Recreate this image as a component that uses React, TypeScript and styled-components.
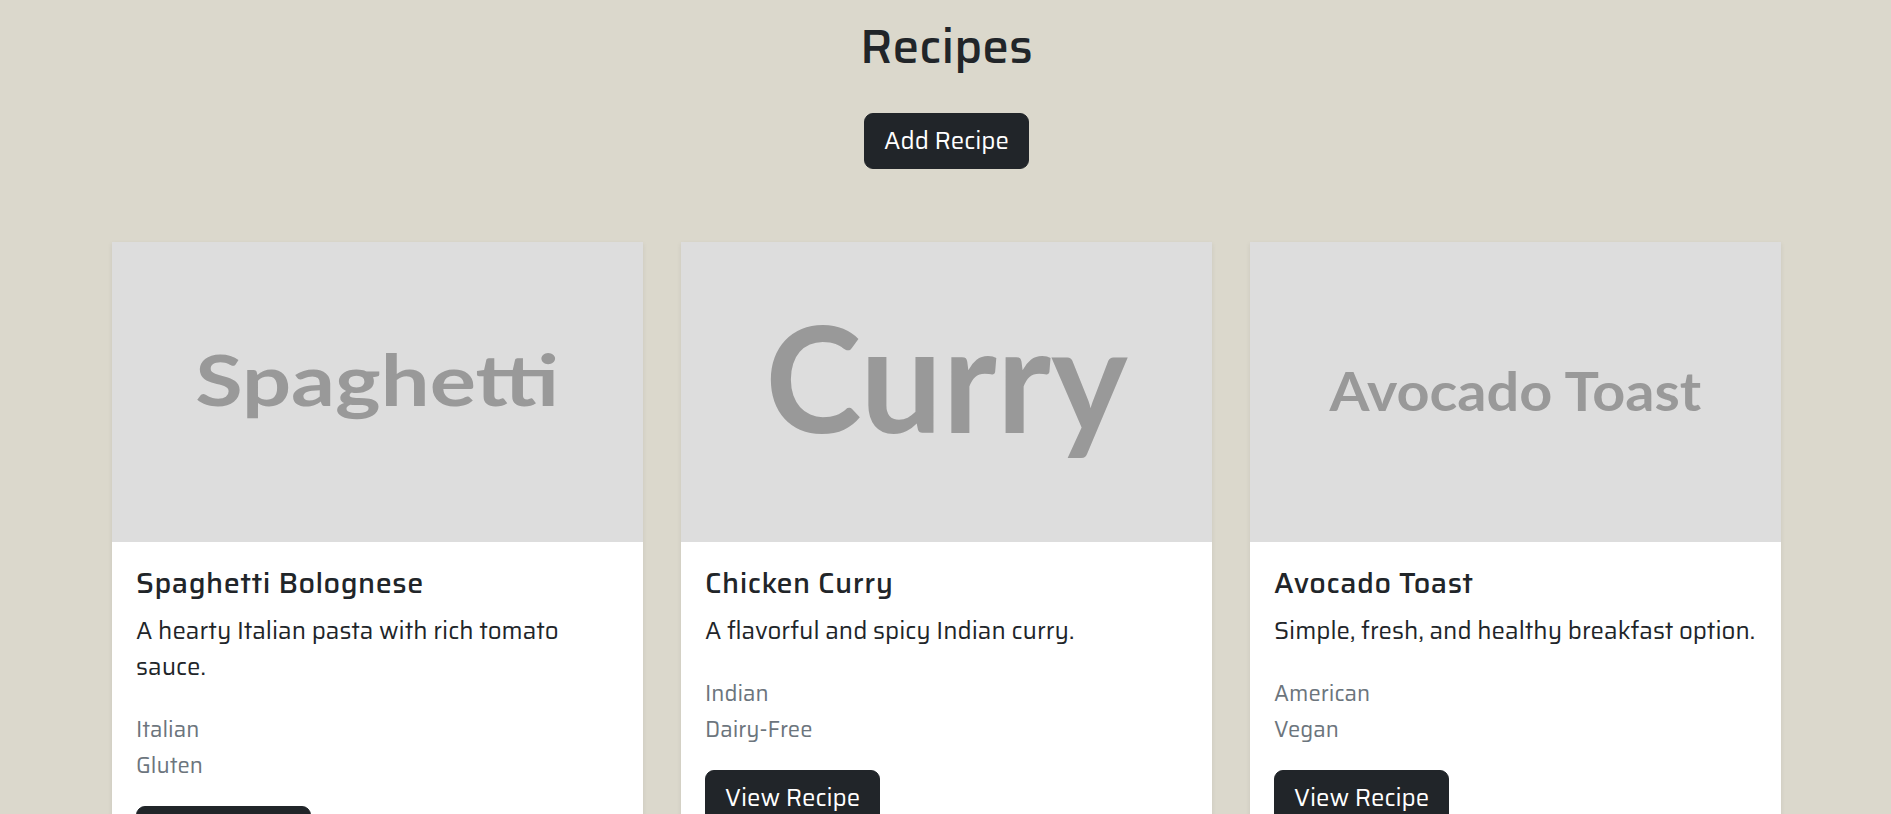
import React from "react";
import styled, { createGlobalStyle } from "styled-components";

const GlobalStyle = createGlobalStyle`
  html, body {
    margin: 0;
    padding: 0;
    background: #dbd8cc;
  }
  body {
    font-family: "Saira", Roboto, "Liberation Sans", sans-serif;
    color: #212529;
  }
  * { box-sizing: border-box; }
`;

const Page = styled.main`
  max-width: 1671px;
  margin: 0 auto;
  padding: 18px 0 0 2px;
  display: flex;
  flex-direction: column;
  align-items: center;
`;

const Heading = styled.h1`
  margin: 0 0 37px;
  font-size: 48px;
  line-height: 1.2;
  font-weight: 500;
  color: #212529;
`;

const DarkButton = styled.button`
  display: inline-block;
  font-family: inherit;
  font-size: 24px;
  line-height: 36px;
  padding: 9px 19px;
  border: 1px solid #212529;
  border-radius: 9px;
  background: #212529;
  color: #ffffff;
  cursor: pointer;
`;

const Grid = styled.section`
  width: 100%;
  margin-top: 73px;
  display: grid;
  grid-template-columns: repeat(3, 1fr);
  gap: 38px;
`;

const Card = styled.article`
  background: #ffffff;
  box-shadow: 0 2px 5px rgba(0, 0, 0, 0.08);
  display: flex;
  flex-direction: column;
`;

const Placeholder = styled.div`
  height: 300px;
  background: #dddddd;
  display: flex;
  align-items: center;
  justify-content: center;
  overflow: hidden;
`;

const PlaceholderText = styled.span<{ $size: number; $lift: number; $stretch: number }>`
  display: inline-block;
  font-family: Lato, "Open Sans", sans-serif;
  font-weight: 700;
  font-size: ${(p) => p.$size}px;
  line-height: normal;
  color: #999999;
  margin-bottom: ${(p) => p.$lift * 2}px;
  transform: scaleX(${(p) => p.$stretch});
  white-space: nowrap;
`;

const Body = styled.div`
  padding: 24px;
  display: flex;
  flex-direction: column;
  align-items: flex-start;
`;

const Title = styled.h5`
  margin: 0 0 13px;
  font-size: 28.8px;
  line-height: 1.2;
  font-weight: 500;
  color: #212529;
  letter-spacing: 0.5px;
`;

const Description = styled.p`
  margin: 0 0 26px;
  font-size: 24px;
  line-height: 36px;
  color: #212529;
`;

const Tags = styled.ul`
  list-style: none;
  margin: 0 0 23px;
  padding: 0;
`;

const Tag = styled.li`
  font-size: 22px;
  line-height: 36px;
  color: #6c757d;
  transform: translateY(1px);
`;

type Recipe = {
  image: string;
  imageSize: number;
  lift: number;
  stretch: number;
  title: string;
  description: string;
  tags: string[];
};

const recipes: Recipe[] = [
  {
    image: "Spaghetti",
    imageSize: 71,
    lift: 13,
    stretch: 1.22,
    title: "Spaghetti Bolognese",
    description: "A hearty Italian pasta with rich tomato sauce.",
    tags: ["Italian", "Gluten"],
  },
  {
    image: "Curry",
    imageSize: 148,
    lift: 16,
    stretch: 0.983,
    title: "Chicken Curry",
    description: "A flavorful and spicy Indian curry.",
    tags: ["Indian", "Dairy-Free"],
  },
  {
    image: "Avocado Toast",
    imageSize: 54,
    lift: 1,
    stretch: 1.066,
    title: "Avocado Toast",
    description: "Simple, fresh, and healthy breakfast option.",
    tags: ["American", "Vegan"],
  },
];

export default function App() {
  return (
    <>
      <GlobalStyle />
      <Page>
        <Heading>Recipes</Heading>
        <DarkButton>Add Recipe</DarkButton>
        <Grid>
          {recipes.map((r) => (
            <Card key={r.title}>
              <Placeholder>
                <PlaceholderText $size={r.imageSize} $lift={r.lift} $stretch={r.stretch}>
                  {r.image}
                </PlaceholderText>
              </Placeholder>
              <Body>
                <Title>{r.title}</Title>
                <Description>{r.description}</Description>
                <Tags>
                  {r.tags.map((t) => (
                    <Tag key={t}>{t}</Tag>
                  ))}
                </Tags>
                <DarkButton>View Recipe</DarkButton>
              </Body>
            </Card>
          ))}
        </Grid>
      </Page>
    </>
  );
}
